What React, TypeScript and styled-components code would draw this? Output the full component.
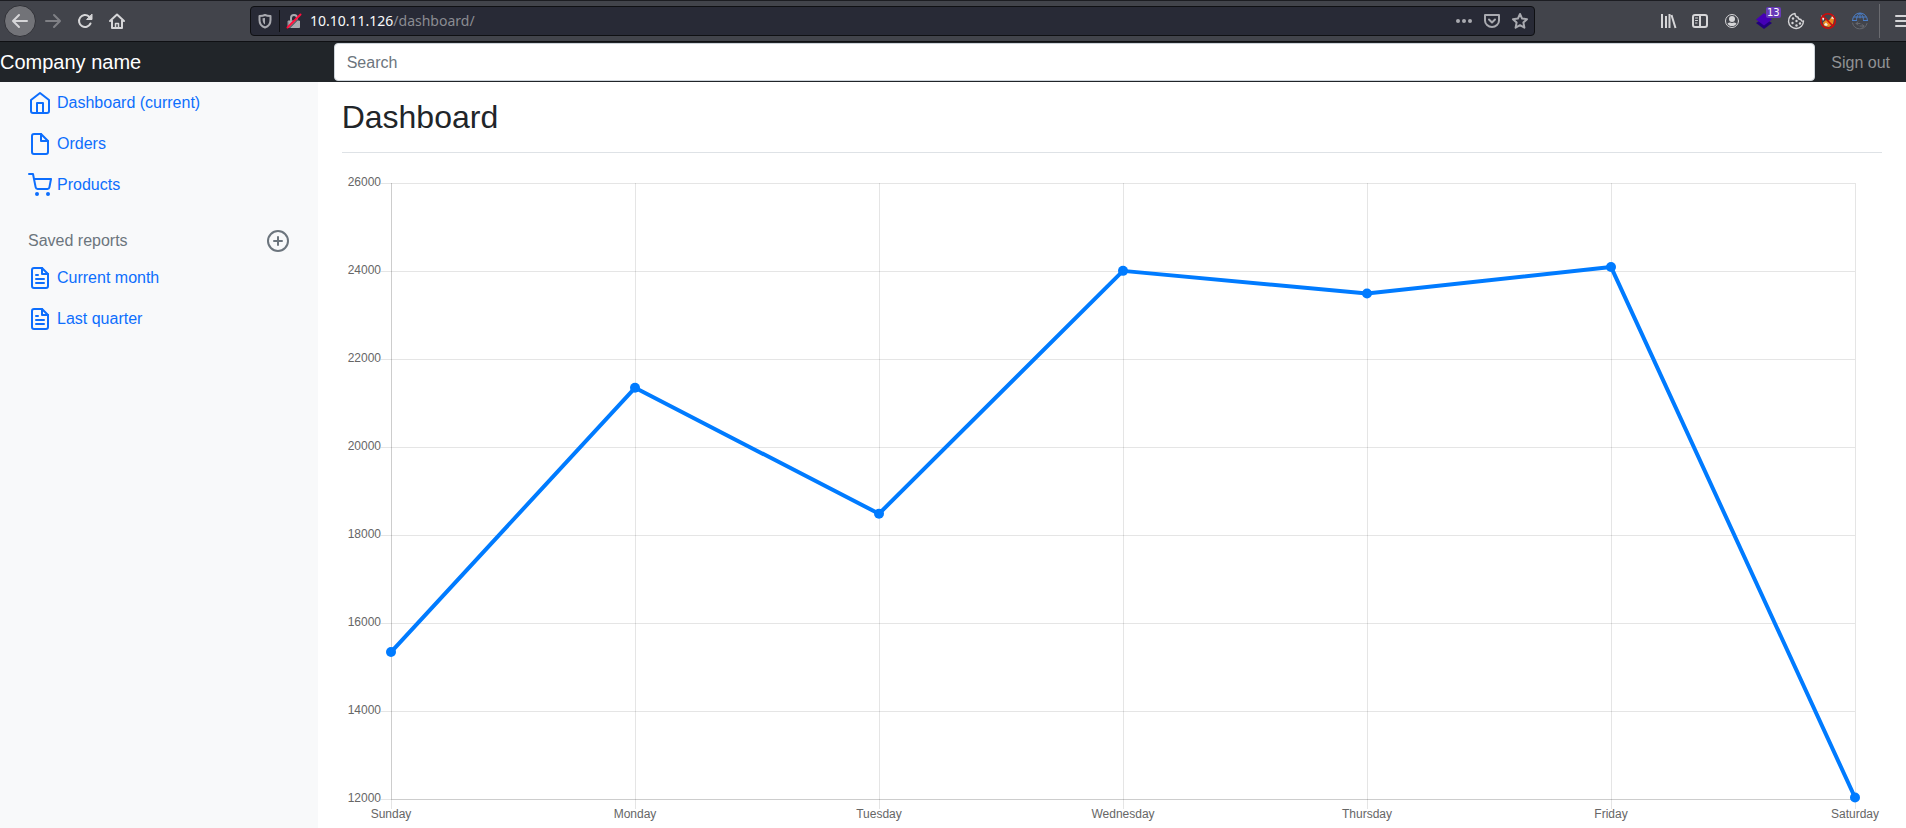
import React, { useEffect, useRef, useState } from "react";
import styled, { createGlobalStyle } from "styled-components";

const GlobalStyle = createGlobalStyle`
  *, *::before, *::after { box-sizing: border-box; }
  body {
    margin: 0;
    background: #fff;
    color: #212529;
    font: 16px/24px "Liberation Sans", Arial, sans-serif;
  }
  button, input { font: inherit; }
`;

const Page = styled.div`
  display: flex;
  flex-direction: column;
  min-height: 100vh;
`;

const BrowserBar = styled.div`
  display: flex;
  align-items: center;
  height: 42px;
  padding-left: 4px;
  overflow: hidden;
  background: #42444b;
  border-top: 1px solid #1c1d22;
  border-bottom: 1px solid #0f1013;
`;

const ToolButton = styled.button<{ $dim?: boolean }>`
  display: flex;
  align-items: center;
  justify-content: center;
  flex: none;
  width: 32px;
  height: 32px;
  padding: 0;
  border: 0;
  border-radius: 4px;
  background: none;
  color: ${(p) => (p.$dim ? "#7f8085" : "#d6d6d8")};
`;

const BackButton = styled(ToolButton)`
  margin-right: 1px;
  border: 1px solid #303137;
  border-radius: 50%;
  background: #727378;
`;

const AddressBar = styled.form`
  display: flex;
  align-items: center;
  flex: 1;
  min-width: 0;
  height: 30px;
  margin: 0 117px;
  border: 1px solid #0f1013;
  border-radius: 4px;
  background: #282a36;
`;

const SiteButton = styled(ToolButton)`
  width: 28px;
  height: 22px;
  color: #a9aab0;
`;

const Divider = styled.span`
  width: 1px;
  height: 22px;
  background: #0f1013;
`;

const Address = styled.label`
  position: relative;
  flex: 1;
  min-width: 0;
  height: 28px;
  margin-left: 2px;
  font: 14px/28px "Noto Sans", sans-serif;
`;

const AddressInput = styled.input`
  width: 100%;
  height: 28px;
  padding: 0;
  border: 0;
  outline: 0;
  background: none;
`;

const AddressText = styled.span`
  position: absolute;
  inset: 0;
  overflow: hidden;
  color: #8b8c92;
  pointer-events: none;
  b { font-weight: 400; color: #f9f9fa; }
`;

const BarActions = styled.div`
  display: flex;
  align-items: center;
  height: 34px;
  margin-right: -13px;
`;

const ActionsEnd = styled.div`
  display: flex;
  align-items: center;
  height: 34px;
  margin-left: 3px;
  padding-left: 7px;
  border-left: 1px solid #6a6b70;
`;

const Badged = styled.span`
  position: relative;
  display: flex;
`;

const Badge = styled.span`
  position: absolute;
  top: -6px;
  left: 10px;
  padding: 0 1px;
  border-radius: 2px;
  background: #673ab7;
  color: #fff;
  font: 10px/11px "DejaVu Sans", sans-serif;
`;

const Navbar = styled.header`
  display: flex;
  align-items: center;
  height: 40px;
  background: #212529;
`;

const Brand = styled.a`
  width: calc(100% / 6 + 16px);
  flex: none;
  color: #fff;
  font-size: 20px;
  line-height: 30px;
  text-decoration: none;
`;

const Search = styled.input`
  flex: 1;
  min-width: 0;
  height: 38px;
  padding: 7px 12px 5px;
  border: 1px solid #ced4da;
  border-radius: 4px;
  background: #fff;
  color: #212529;
  &::placeholder { color: #6c757d; opacity: 1; }
`;

const SignOut = styled.a`
  padding: 9px 16px 7px;
  color: #909294;
  text-decoration: none;
`;

const Body = styled.div`
  display: grid;
  grid-template-columns: minmax(0, 1fr) minmax(0, 5fr);
  flex: 1;
`;

const Sidebar = styled.nav`
  padding: 0 12px;
  background: #f8f9fa;
`;

const NavList = styled.ul`
  margin: 0;
  padding: 0;
  list-style: none;
`;

const NavLink = styled.a`
  display: flex;
  align-items: center;
  gap: 5px;
  height: 41px;
  padding: 1px 16px 0;
  color: #0d6efd;
  line-height: 22px;
  text-decoration: none;
`;

const SectionHead = styled.h2`
  display: flex;
  align-items: center;
  justify-content: space-between;
  height: 24px;
  margin: 24px 16px 4px;
  color: #6c757d;
  font-size: 16px;
  line-height: 24px;
  font-weight: 400;
`;

const AddButton = styled.button`
  display: flex;
  padding: 0;
  border: 0;
  background: none;
  color: #6c757d;
`;

const Main = styled.main`
  padding: 0 24px;
`;

const Title = styled.h1`
  margin: 0 0 16px;
  padding: 16px 0;
  border-bottom: 1px solid #dee2e6;
  font-size: 32px;
  line-height: 38px;
  font-weight: 400;
`;

const ChartBox = styled.div`
  width: 100%;
`;

const ChartSvg = styled.svg`
  display: block;
  overflow: visible;
  font: 12px "Liberation Sans", Arial, sans-serif;
`;

const DAYS: [string, number][] = [
  ["Sunday", 15339],
  ["Monday", 21345],
  ["Tuesday", 18483],
  ["Wednesday", 24003],
  ["Thursday", 23489],
  ["Friday", 24092],
  ["Saturday", 12034],
];
const TICKS = [26000, 24000, 22000, 20000, 18000, 16000, 14000, 12000];

function SalesChart() {
  const box = useRef<HTMLDivElement>(null);
  const [width, setWidth] = useState(1540);
  useEffect(() => {
    if (!box.current) return;
    const observer = new ResizeObserver(([entry]) => setWidth(Math.floor(entry.contentRect.width)));
    observer.observe(box.current);
    return () => observer.disconnect();
  }, []);

  const height = Math.round((width * 380) / 900);
  const left = 49;
  const right = width - 27;
  const top = 14;
  const bottom = height - 20;
  const x = (i: number) => left + ((right - left) * i) / (DAYS.length - 1);
  const y = (v: number) => top + ((26000 - v) / 14000) * (bottom - top);

  return (
    <ChartBox ref={box}>
      <ChartSvg width={width} height={height} role="img" aria-label="Sales by day">
        <g stroke="#000" strokeOpacity="0.1">
          {TICKS.map((t) => (
            <path key={t} d={`M${left - 10} ${Math.round(y(t)) + 0.5}H${right}`} />
          ))}
          {DAYS.map(([day], i) => (
            <path key={day} d={`M${Math.round(x(i)) + 0.5} ${top}V${bottom + 10}`} />
          ))}
          <path d={`M${left + 0.5} ${top}V${bottom}`} />
          <path d={`M${left} ${bottom + 0.5}H${right}`} />
        </g>
        <g fill="#666">
          {TICKS.map((t) => (
            <text key={t} x={left - 10} y={Math.round(y(t)) + 3} textAnchor="end">{t}</text>
          ))}
          {DAYS.map(([day], i) => (
            <text key={day} x={x(i)} y={bottom + 19} textAnchor="middle">{day}</text>
          ))}
        </g>
        <polyline
          points={DAYS.map(([, v], i) => `${x(i)},${y(v)}`).join(" ")}
          fill="none"
          stroke="#007bff"
          strokeWidth="4"
          strokeLinejoin="round"
        />
        {DAYS.map(([day, v], i) => (
          <circle key={day} cx={x(i)} cy={y(v)} r="5" fill="#007bff" />
        ))}
      </ChartSvg>
    </ChartBox>
  );
}

const Glyph = ({ children, stroke = 2 }: { children: React.ReactNode; stroke?: number }) => (
  <svg width="16" height="16" viewBox="0 0 16 16" fill="none" stroke="currentColor" strokeWidth={stroke} strokeLinecap="round" strokeLinejoin="round" overflow="visible" aria-hidden="true">
    {children}
  </svg>
);

const Feather = ({ children }: { children: React.ReactNode }) => (
  <svg width="24" height="24" viewBox="0 0 24 24" fill="none" stroke="currentColor" strokeWidth="2" strokeLinecap="round" strokeLinejoin="round" aria-hidden="true">
    {children}
  </svg>
);

const FileTextIcon = () => (
  <Feather>
    <path d="M14 2H6a2 2 0 0 0-2 2v16a2 2 0 0 0 2 2h12a2 2 0 0 0 2-2V8z" />
    <path d="M14 2v6h6M16 13H8M16 17H8M10 9H8" />
  </Feather>
);

export default function App() {
  return (
    <Page>
      <GlobalStyle />
      <BrowserBar>
        <BackButton aria-label="Back"><Glyph><path d="M15 8H1.500M7 2 1 8l6 6" /></Glyph></BackButton>
        <ToolButton $dim aria-label="Forward"><Glyph><path d="M1 8h13.500M9 2l6 6-6 6" /></Glyph></ToolButton>
        <ToolButton aria-label="Reload">
          <Glyph>
            <path d="M13.500 10.500A6 6 0 1 1 12 3.500L14 5.500" />
            <path d="M15 1.500V6.500H10Z" fill="currentColor" strokeWidth="1" />
          </Glyph>
        </ToolButton>
        <ToolButton aria-label="Home">
          <Glyph>
            <path d="M1 8 8 1.500 15 8M3 7.500V15H13V7.500" />
            <path d="M6.500 15V10.500H9.500V15" strokeWidth="1.500" />
          </Glyph>
        </ToolButton>
        <AddressBar>
          <SiteButton type="button" aria-label="Tracking protection">
            <Glyph>
              <path d="M8 2C6 3 4 3 2.500 3V7C2.500 11 4.500 13.500 8 14.500 11.500 13.500 13.500 11 13.500 7V3C12 3 10 3 8 2Z" />
              <path d="M8 5V11.500C6.500 10.500 5.500 9 5.500 5.200Z" fill="currentColor" stroke="none" />
            </Glyph>
          </SiteButton>
          <Divider />
          <SiteButton type="button" aria-label="Connection not secure">
            <Glyph>
              <rect x="2.500" y="8" width="11" height="6.500" fill="currentColor" strokeWidth="1" />
              <path d="M5 7V5a3 3 0 0 1 6 0V7" />
              <path d="M3 15.500 16 2.500" stroke="#282a36" strokeWidth="1" />
              <path d="M1.500 14.500 14.500 1.500" stroke="#ff0f3c" />
            </Glyph>
          </SiteButton>
          <Address>
            <AddressInput aria-label="Address" />
            <AddressText><b>10.10.11.126</b>/dashboard/</AddressText>
          </Address>
          <SiteButton type="button" aria-label="Page actions">
            <Glyph>
              <g fill="currentColor" stroke="none"><circle cx="2" cy="8" r="2" /><circle cx="8" cy="8" r="2" /><circle cx="14" cy="8" r="2" /></g>
            </Glyph>
          </SiteButton>
          <SiteButton type="button" aria-label="Save to Pocket">
            <Glyph>
              <path d="M1 2H15V7.500A7 6.500 0 0 1 1 7.500Z" />
              <path d="M5 6.500 8 9.500 11 6.500" />
            </Glyph>
          </SiteButton>
          <SiteButton type="button" aria-label="Bookmark this page">
            <Glyph><path d="M8 1 10.100 5.600 15 6.200 11.400 9.600 12.400 14.700 8 12.200 3.600 14.700 4.600 9.600 1 6.200 5.900 5.600Z" /></Glyph>
          </SiteButton>
        </AddressBar>
        <BarActions>
          <ToolButton aria-label="Library"><Glyph><path d="M2 1V15M6 3V15M9.500 1V15M11.500 2 15.500 15" strokeLinecap="butt" /></Glyph></ToolButton>
          <ToolButton aria-label="Sidebars">
            <Glyph>
              <rect x="1" y="2" width="14" height="12" rx="2" />
              <path d="M8 2V14" />
              <path d="M3.500 5H5.500M3.500 7.500H5.500M3.500 10H5" strokeWidth="1" />
            </Glyph>
          </ToolButton>
          <ToolButton aria-label="Account">
            <Glyph stroke={1}>
              <circle cx="8" cy="8" r="6.500" />
              <g fill="currentColor" stroke="none"><circle cx="8" cy="6" r="3" /><path d="M3.500 10.500C5 9.500 6 9 8 10 10 9 11 9.500 12.500 10.500 11.500 12.500 10 13 8 13S4.500 12.500 3.500 10.500Z" /></g>
            </Glyph>
          </ToolButton>
          <ToolButton aria-label="Request layers">
            <Badged>
              <Glyph>
                <g stroke="none"><path d="M0 10 8 5 16 10 8 16Z" fill="#22007c" /><path d="M0 6.500 8 0 16 6.500 8 12.500Z" fill="#4500b5" /></g>
              </Glyph>
              <Badge>13</Badge>
            </Badged>
          </ToolButton>
          <ToolButton aria-label="Cookie editor">
            <Glyph stroke={1}>
              <path d="M7 .5A7.500 7.500 0 1 0 15.500 8C14 8.500 13 7.500 13 6.500 11 6.500 10 5.500 10 4 8 4 7 2.500 7 .5Z" strokeWidth="1.400" />
              <g fill="currentColor" stroke="none"><circle cx="5" cy="5.500" r="1.200" /><circle cx="4.500" cy="10" r="1.200" /><circle cx="8.500" cy="8" r="1.200" /><circle cx="8.500" cy="12.500" r="1.200" /><circle cx="12" cy="10.500" r="1.200" /></g>
            </Glyph>
          </ToolButton>
          <ToolButton aria-label="Proxy disabled">
            <Glyph>
              <g stroke="none">
                <path d="M3 9.500 6 7 9 7.500 12 3 14 6 13 11 9 14 4 13Z" fill="#ef8b20" />
                <path d="M1 2 4.500 5.500 3 8ZM13.500 2 11 5.500 14 6ZM4 11.500 6 9.500 8 12 6 13Z" fill="#f4eadf" />
              </g>
              <circle cx="8" cy="8" r="7.200" stroke="#cc0c0c" strokeWidth="1.600" />
              <path d="M3 3 13 13" stroke="#cc0c0c" strokeWidth="1.600" />
            </Glyph>
          </ToolButton>
          <ToolButton aria-label="Web tools">
            <Glyph stroke={1}>
              <path d="M.5 7.500A7.500 7.500 0 0 1 15.500 7.500M4.500 7.500C4.500 4 6 .5 8 .5S11.500 4 11.500 7.500M8 .5V5M2 4H14M.5 7.500H4.500M11.500 7.500H15.500" stroke="#4b7fc9" />
              <path d="M.5 10A7.500 7.500 0 0 0 15 10.500M4 10.500H8M6 9 4 10.500 6 12M12 13H8M10 11.500 12 13 10 14.500" stroke="#65676d" />
            </Glyph>
          </ToolButton>
          <ActionsEnd>
            <ToolButton aria-label="Menu"><Glyph><path d="M1 3h14M1 8h14M1 13h14" /></Glyph></ToolButton>
          </ActionsEnd>
        </BarActions>
      </BrowserBar>
      <Navbar>
        <Brand href="#">Company name</Brand>
        <Search type="text" placeholder="Search" aria-label="Search" />
        <SignOut href="#">Sign out</SignOut>
      </Navbar>
      <Body>
        <Sidebar>
          <NavList>
            <li>
              <NavLink href="#">
                <Feather><path d="M3 9l9-7 9 7v11a2 2 0 0 1-2 2H5a2 2 0 0 1-2-2z" /><path d="M9 22V12h6v10" /></Feather>
                Dashboard (current)
              </NavLink>
            </li>
            <li>
              <NavLink href="#">
                <Feather><path d="M13 2H6a2 2 0 0 0-2 2v16a2 2 0 0 0 2 2h12a2 2 0 0 0 2-2V9z" /><path d="M13 2v7h7" /></Feather>
                Orders
              </NavLink>
            </li>
            <li>
              <NavLink href="#">
                <Feather><circle cx="9" cy="21" r="1" /><circle cx="20" cy="21" r="1" /><path d="M1 1h4l2.680 13.390a2 2 0 0 0 2 1.610h9.720a2 2 0 0 0 2-1.610L23 6H6" /></Feather>
                Products
              </NavLink>
            </li>
          </NavList>
          <SectionHead>
            Saved reports
            <AddButton aria-label="Add a new report">
              <Feather><circle cx="12" cy="12" r="10" /><path d="M12 8v8M8 12h8" /></Feather>
            </AddButton>
          </SectionHead>
          <NavList>
            <li><NavLink href="#"><FileTextIcon />Current month</NavLink></li>
            <li><NavLink href="#"><FileTextIcon />Last quarter</NavLink></li>
          </NavList>
        </Sidebar>
        <Main>
          <Title>Dashboard</Title>
          <SalesChart />
        </Main>
      </Body>
    </Page>
  );
}
